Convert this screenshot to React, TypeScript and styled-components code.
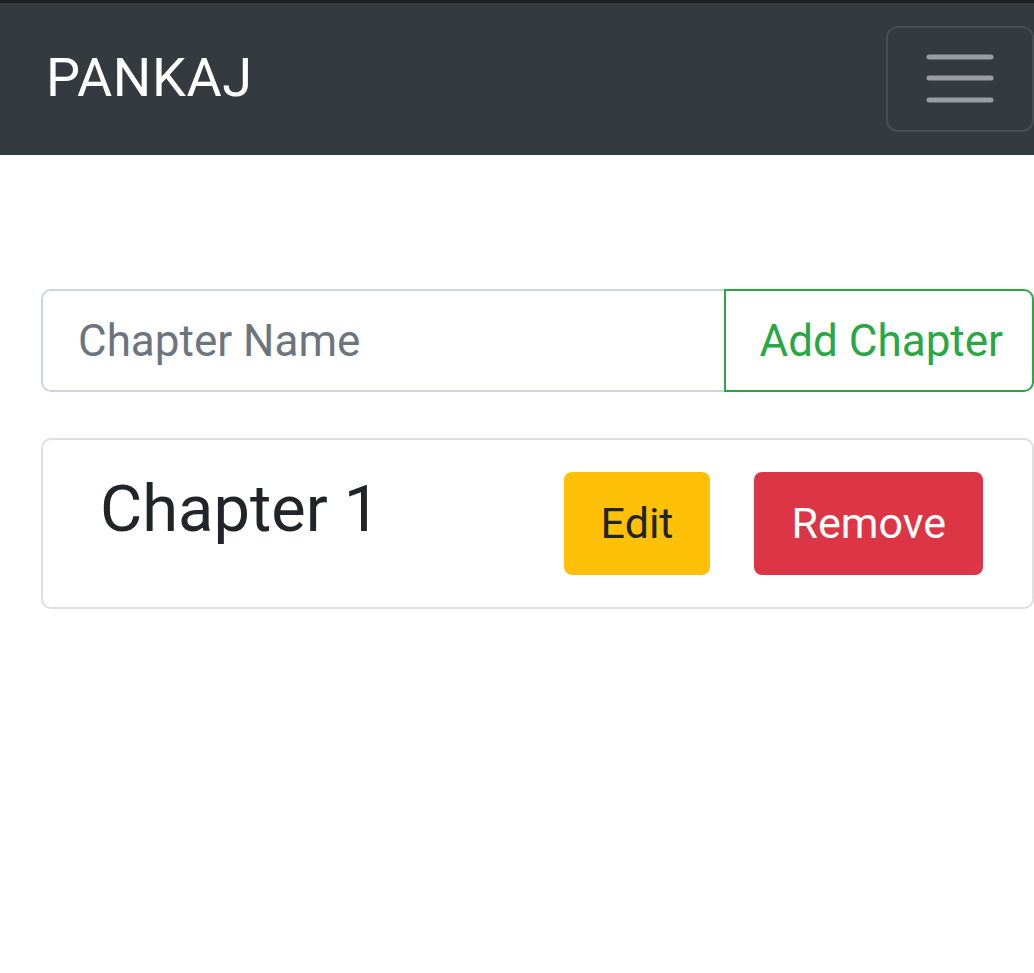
import React from "react";
import styled, { createGlobalStyle } from "styled-components";

const Global = createGlobalStyle`
  * { box-sizing: border-box; }
  html, body { margin: 0; padding: 0; background: #fff; overflow-x: hidden; }
  body { font-family: Roboto, "Noto Sans", "Liberation Sans", sans-serif; color: #212529; }
`;

const NavBar = styled.nav`
  height: 155px;
  background: #343a40;
  border-top: 3px solid #1f2024;
  display: flex;
  align-items: center;
  justify-content: space-between;
  padding-left: 46px;
`;

const Brand = styled.a`
  color: #fff;
  font-size: 54px;
  letter-spacing: 0.6px;
  line-height: 1;
  text-decoration: none;
  margin-top: -2px;
`;

const Toggler = styled.button`
  width: 148px;
  height: 106px;
  background: transparent;
  border: 2px solid rgba(255, 255, 255, 0.1);
  border-radius: 12px;
  display: flex;
  align-items: center;
  justify-content: center;
  padding: 0;
`;

const Main = styled.main`
  padding: 134px 0 0 41px;
  display: flex;
  flex-direction: column;
  gap: 46px;
`;

const InputGroup = styled.div`
  display: flex;
  height: 103px;
`;

const TextInput = styled.input`
  flex: 1;
  min-width: 0;
  height: 100%;
  border: 2px solid #ced4da;
  border-right: none;
  border-radius: 10px 0 0 10px;
  padding: 0 0 0 35px;
  font-family: inherit;
  font-size: 44px;
  color: #495057;
  outline: none;
  &::placeholder { color: #6c757d; }
`;

const AddButton = styled.button`
  height: 100%;
  border: 2px solid #28a745;
  border-radius: 0 10px 10px 0;
  background: #fff;
  color: #28a745;
  font-family: inherit;
  font-size: 44px;
  padding: 0 29px 0 34px;
  white-space: nowrap;
`;

const Card = styled.div`
  border: 2px solid rgba(0, 0, 0, 0.125);
  border-radius: 10px;
  padding: 30px 49px 32px 57px;
  display: flex;
  justify-content: space-between;
  align-items: flex-start;
`;

const Title = styled.h1`
  margin: 0;
  font-size: 65px;
  font-weight: 400;
  line-height: 1.2;
  color: #212529;
`;

const Actions = styled.div`
  display: flex;
  gap: 44px;
  margin-top: 2px;
`;

const ActionButton = styled.button<{ $variant: "warning" | "danger" }>`
  border: none;
  border-radius: 8px;
  padding: 19px 37px;
  font-family: inherit;
  font-size: 43px;
  line-height: 1.5;
  background: ${(p) => (p.$variant === "warning" ? "#ffc107" : "#dc3545")};
  color: ${(p) => (p.$variant === "warning" ? "#212529" : "#fff")};
`;

const MenuIcon = () => (
  <svg width="68" height="50" viewBox="0 0 68 50">
    <g stroke="#9a9da1" strokeWidth="5" strokeLinecap="round">
      <line x1="3" y1="3" x2="65" y2="3" />
      <line x1="3" y1="24" x2="65" y2="24" />
      <line x1="3" y1="46" x2="65" y2="46" />
    </g>
  </svg>
);

export default function App() {
  return (
    <>
      <Global />
      <NavBar>
        <Brand href="#">PANKAJ</Brand>
        <Toggler aria-label="Toggle navigation">
          <MenuIcon />
        </Toggler>
      </NavBar>
      <Main>
        <InputGroup>
          <TextInput placeholder="Chapter Name" />
          <AddButton>Add Chapter</AddButton>
        </InputGroup>
        <Card>
          <Title>Chapter 1</Title>
          <Actions>
            <ActionButton $variant="warning">Edit</ActionButton>
            <ActionButton $variant="danger">Remove</ActionButton>
          </Actions>
        </Card>
      </Main>
    </>
  );
}
